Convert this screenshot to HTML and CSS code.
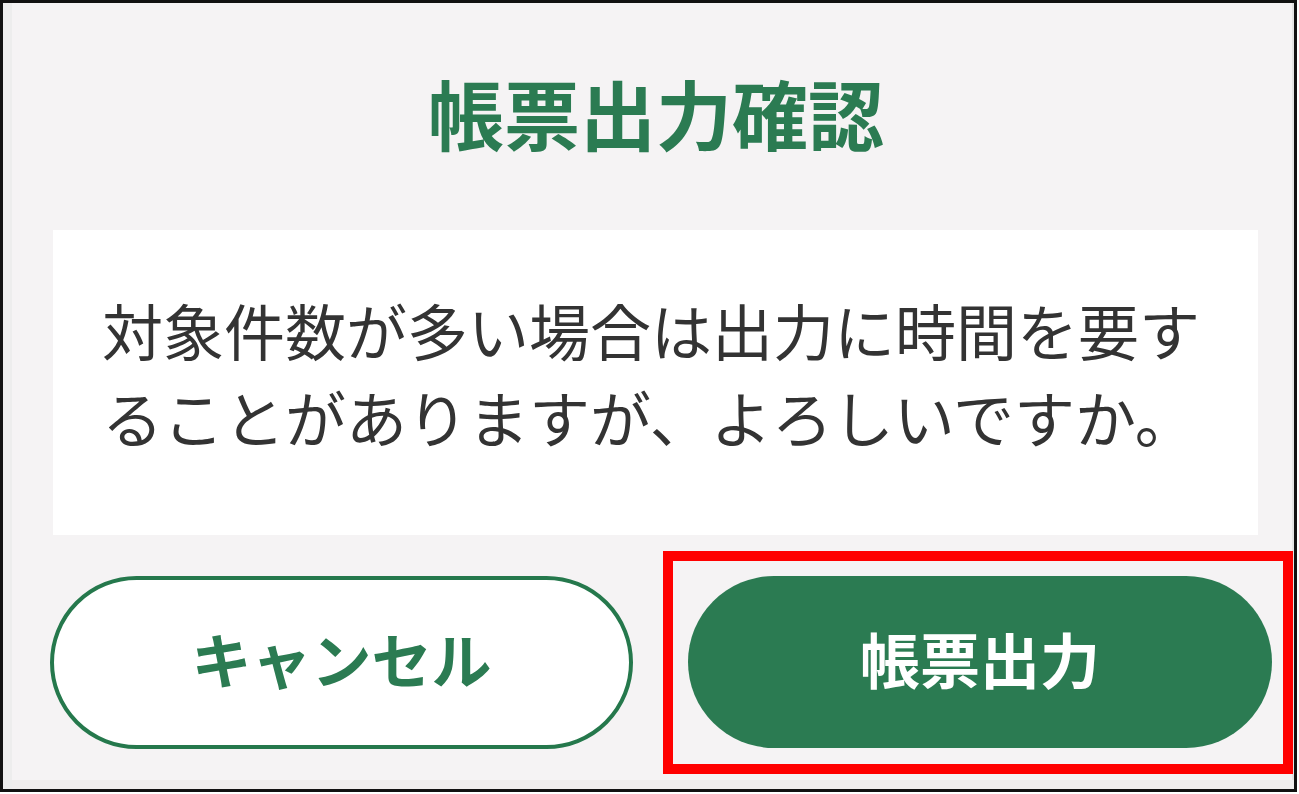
FILE: index.html
```html
<html>
<head>
    <title>帳票出力確認</title>
    <link rel="stylesheet" href="styles.css">
</head>
<body>
    <div class="frame">
        <div class="dialog">
            <!-- Title -->
            <h1 class="dialog-title">帳票出力確認</h1>

            <!-- Message -->
            <div class="dialog-message">
                <p>対象件数が多い場合は出力に時間を要す<br>ることがありますが、よろしいですか。</p>
            </div>

            <!-- Buttons -->
            <div class="dialog-actions">
                <button type="button" class="btn btn-cancel">キャンセル</button>
                <div class="highlight">
                    <button type="button" class="btn btn-submit">帳票出力</button>
                </div>
            </div>
        </div>
    </div>
</body>
</html>
```

FILE: styles.css
```css
body, h1, p {
    margin: 0;
    padding: 0;
    box-sizing: border-box;
}

body {
    background-color: #fff;
    font-family: 'Noto Sans CJK JP', 'Noto Sans', sans-serif;
    color: #333;
}

.frame {
    width: 1297px;
    height: 792px;
    box-sizing: border-box;
    border: 3px solid #111;
    background-color: #f5f3f4;
    box-shadow: inset 9px 0 0 #ededed, inset 0 -9px 0 #efeded, inset -2px 0 0 #e4e4e4;
}

.dialog {
    padding: 71px 0 0 47px;
}

.dialog-title {
    font-size: 76px;
    line-height: 1;
    height: 76px;
    font-weight: 700;
    color: #2b7b52;
    text-align: center;
    padding-right: 32px;
}

.dialog-message {
    margin: 80px 0 0 3px;
    width: 1205px;
    height: 305px;
    box-sizing: border-box;
    padding: 56px 0 0 49px;
    background-color: #fff;
}

.dialog-message p {
    font-size: 61px;
    line-height: 87px;
    color: #333;
    white-space: nowrap;
}

.dialog-actions {
    display: flex;
    align-items: center;
    margin-top: 16px;
}

.btn {
    font-family: 'Noto Sans CJK JP', 'Noto Sans', sans-serif;
    font-size: 60px;
    font-weight: 700;
    border-radius: 90px;
    cursor: pointer;
    padding: 0 0 10px 0;
}

.btn-cancel {
    width: 583px;
    height: 173px;
    background-color: #fff;
    border: 4px solid #25784c;
    color: #2b7b52;
}

.highlight {
    margin-left: 30px;
    width: 630px;
    height: 223px;
    box-sizing: border-box;
    border: 10px solid #ff0000;
    padding: 15px 11px 16px 15px;
}

.btn-submit {
    width: 584px;
    height: 172px;
    background-color: #2b7b52;
    border: none;
    color: #fff;
}
```
